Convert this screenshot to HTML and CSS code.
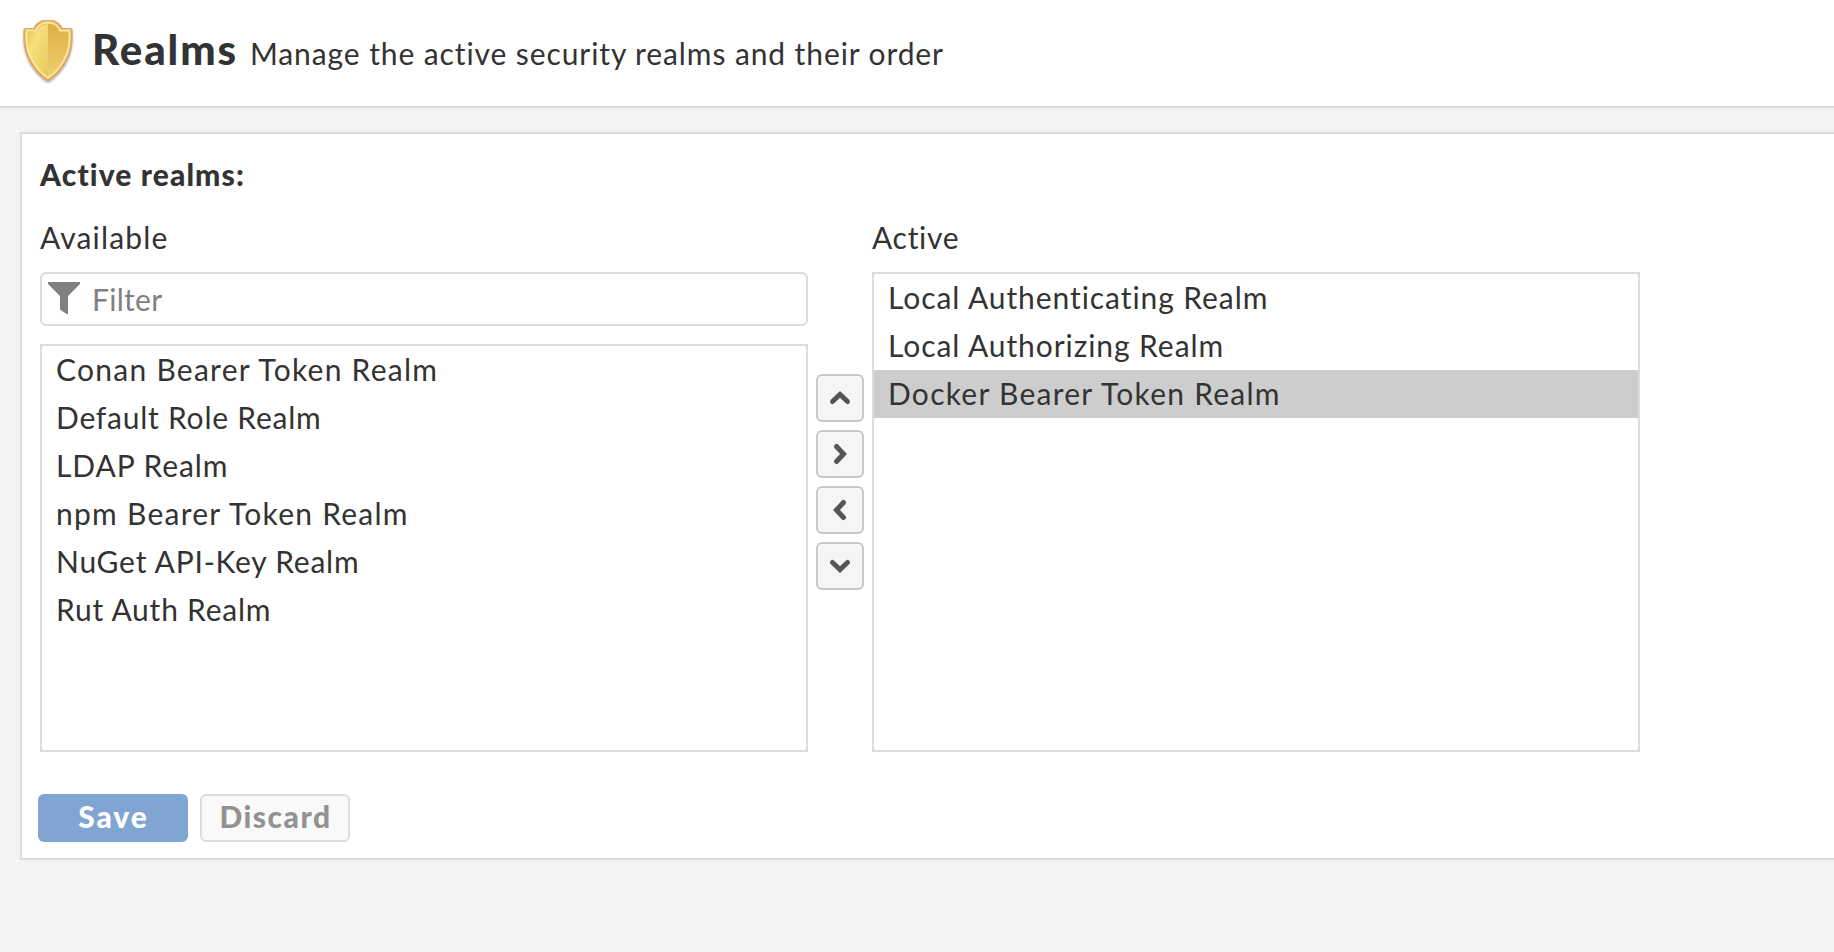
FILE: index.html
```html
<!DOCTYPE html>
<html lang="en">
<head>
<meta charset="utf-8">
<title>Realms</title>
<link rel="stylesheet" href="styles.css">
</head>
<body>
<header class="header">
  <svg class="shield" viewBox="0 0 56 68" width="56" height="68">
    <defs>
      <linearGradient id="left" x1="0" y1="0" x2="1" y2="1">
        <stop offset="0" stop-color="#e6bd4e"/><stop offset=".35" stop-color="#f7e07c"/><stop offset="1" stop-color="#e9c65d"/>
      </linearGradient>
      <linearGradient id="right" x1="0" y1="0" x2="0" y2="1">
        <stop offset="0" stop-color="#dfb045"/><stop offset="1" stop-color="#efcf6c"/>
      </linearGradient>
    </defs>
    <path class="shield-edge" d="M23 4H33C37.500 5.500 41 8 42.500 12H50.500Q52.500 12 52.500 13.500V24C52 40 43 55 30 64Q28 65.300 26 64C13 55 4 40 3.500 24V13.500Q3.500 12 5.500 12H13.500C15 8 18.500 5.500 23 4Z"/>
    <path fill="url(#left)" d="M28 8C22 8 18.500 11 17 15.500H7V24C7.500 38 16 52 28 61Z"/>
    <path fill="url(#right)" d="M28 8C34 8 37.500 11 39 15.500H49V24C48.500 38 40 52 28 61Z"/>
    <path class="shield-trim" d="M28 6.500C34 6.500 38.500 10 40 14.500H49.500V24C49.300 38 41 53 28 62C15 53 6.700 38 6.500 24V14.500H16C17.500 10 22 6.500 28 6.500Z"/>
  </svg>
  <h1 class="title">Realms</h1>
  <p class="subtitle">Manage the active security realms and their order</p>
</header>
<main class="panel">
  <h2 class="panel-title">Active realms:</h2>
  <div class="selector">
    <section class="column">
      <div class="label">Available</div>
      <div class="filter">
        <svg width="32" height="32" viewBox="0 0 32 32"><path fill="#808080" d="M.5 0H31.500Q32 0 32 .7V2L20 14V32H18.500L12 27.500V14L0 2V.7Q0 0 .5 0Z"/></svg>
        <span class="placeholder">Filter</span>
      </div>
      <ul class="list">
        <li class="item wider">Conan Bearer Token Realm</li>
        <li class="item narrower">Default Role Realm</li>
        <li class="item">LDAP Realm</li>
        <li class="item wider">npm Bearer Token Realm</li>
        <li class="item narrower">NuGet API-Key Realm</li>
        <li class="item narrower">Rut Auth Realm</li>
      </ul>
    </section>
    <div class="movers">
      <button class="mover" aria-label="Move up"><svg width="24" height="24" viewBox="0 0 24 24"><path d="M4.500 15.500 12 8.500l7.500 7"/></svg></button>
      <button class="mover" aria-label="Add"><svg width="24" height="24" viewBox="0 0 24 24"><path d="M8.500 4.500 15.500 12l-7 7.500"/></svg></button>
      <button class="mover" aria-label="Remove"><svg width="24" height="24" viewBox="0 0 24 24"><path d="M15.500 4.500 8.500 12l7 7.500"/></svg></button>
      <button class="mover" aria-label="Move down"><svg width="24" height="24" viewBox="0 0 24 24"><path d="M4.500 8.500 12 15.500l7.500-7"/></svg></button>
    </div>
    <section class="column">
      <div class="label label-active">Active</div>
      <ul class="list">
        <li class="item">Local Authenticating Realm</li>
        <li class="item">Local Authorizing Realm</li>
        <li class="item wider selected">Docker Bearer Token Realm</li>
      </ul>
    </section>
  </div>
  <div class="actions">
    <button class="btn save">Save</button>
    <button class="btn discard">Discard</button>
  </div>
</main>
</body>
</html>
```

FILE: styles.css
```css
* { box-sizing: border-box; }
body {
  margin: 0;
  height: 952px;
  overflow: hidden;
  background: #f3f3f3;
  color: #333;
  font: 30px/44px Lato, "Liberation Sans", sans-serif;
  font-variant-ligatures: none;
}
h1, h2, p, ul { margin: 0; padding: 0; }
.header {
  display: flex;
  height: 108px;
  padding: 16px 0 0 20px;
  background: #fff;
  border-bottom: 2px solid #dcdcdc;
}
.shield { flex: none; filter: drop-shadow(0 2px 1px rgba(90, 70, 50, .45)); }
.shield-edge { fill: #e3a95c; }
.shield-trim { fill: none; stroke: #fbe9a6; stroke-width: 2; }
.title { margin: 3px 0 0 16px; width: 158px; font-size: 42px; line-height: 60px; font-weight: 900; letter-spacing: 1.9px; }
.subtitle { padding-top: 15px; white-space: nowrap; letter-spacing: .9px; }
.panel {
  height: 728px;
  margin: 24px 0 0 20px;
  padding: 18px 0 0 18px;
  background: #fff;
  border: 2px solid #dcdcdc;
  border-right: 0;
}
.panel-title { font-size: 30px; height: 63px; font-weight: 900; letter-spacing: 1.1px; }
.selector { display: flex; height: 537px; gap: 8px; }
.column { display: flex; flex-direction: column; width: 768px; }
.label { height: 57px; flex: none; letter-spacing: 1.15px; }
.label-active { letter-spacing: .7px; }
.filter {
  display: flex;
  flex: none;
  height: 54px;
  margin-bottom: 18px;
  padding: 8px 6px;
  gap: 12px;
  border: 2px solid #dcdcdc;
  border-radius: 6px;
}
.placeholder { line-height: 34px; letter-spacing: .3px; color: #808080; }
.list { flex: 1; list-style: none; border: 2px solid #dcdcdc; }
.item { height: 48px; padding-left: 14px; line-height: 46px; letter-spacing: .93px; white-space: nowrap; }
.wider { letter-spacing: 1.26px; }
.narrower { letter-spacing: .77px; }
.selected { background: #cdcdcd; }
.movers { display: flex; flex-direction: column; gap: 8px; padding-top: 159px; }
.mover {
  display: flex;
  align-items: center;
  justify-content: center;
  width: 48px;
  height: 48px;
  padding: 0;
  background: #f5f5f5;
  border: 2px solid #c8c8c8;
  border-radius: 6px;
}
.mover path { fill: none; stroke: #555; stroke-width: 5; stroke-linecap: round; stroke-linejoin: miter; }
.actions { display: flex; gap: 12px; margin: 42px 0 0 -2px; }
.btn {
  width: 150px;
  height: 48px;
  padding: 0 0 5px 1px;
  border: 0;
  border-radius: 6px;
  font: 900 30px/40px Lato, "Liberation Sans", sans-serif;
  letter-spacing: 1.5px;
}
.save { background: #81a5d3; color: #fff; letter-spacing: 1.9px; }
.discard { background: #f9f9f9; border: 2px solid #dcdcdc; color: #929292; }
```
